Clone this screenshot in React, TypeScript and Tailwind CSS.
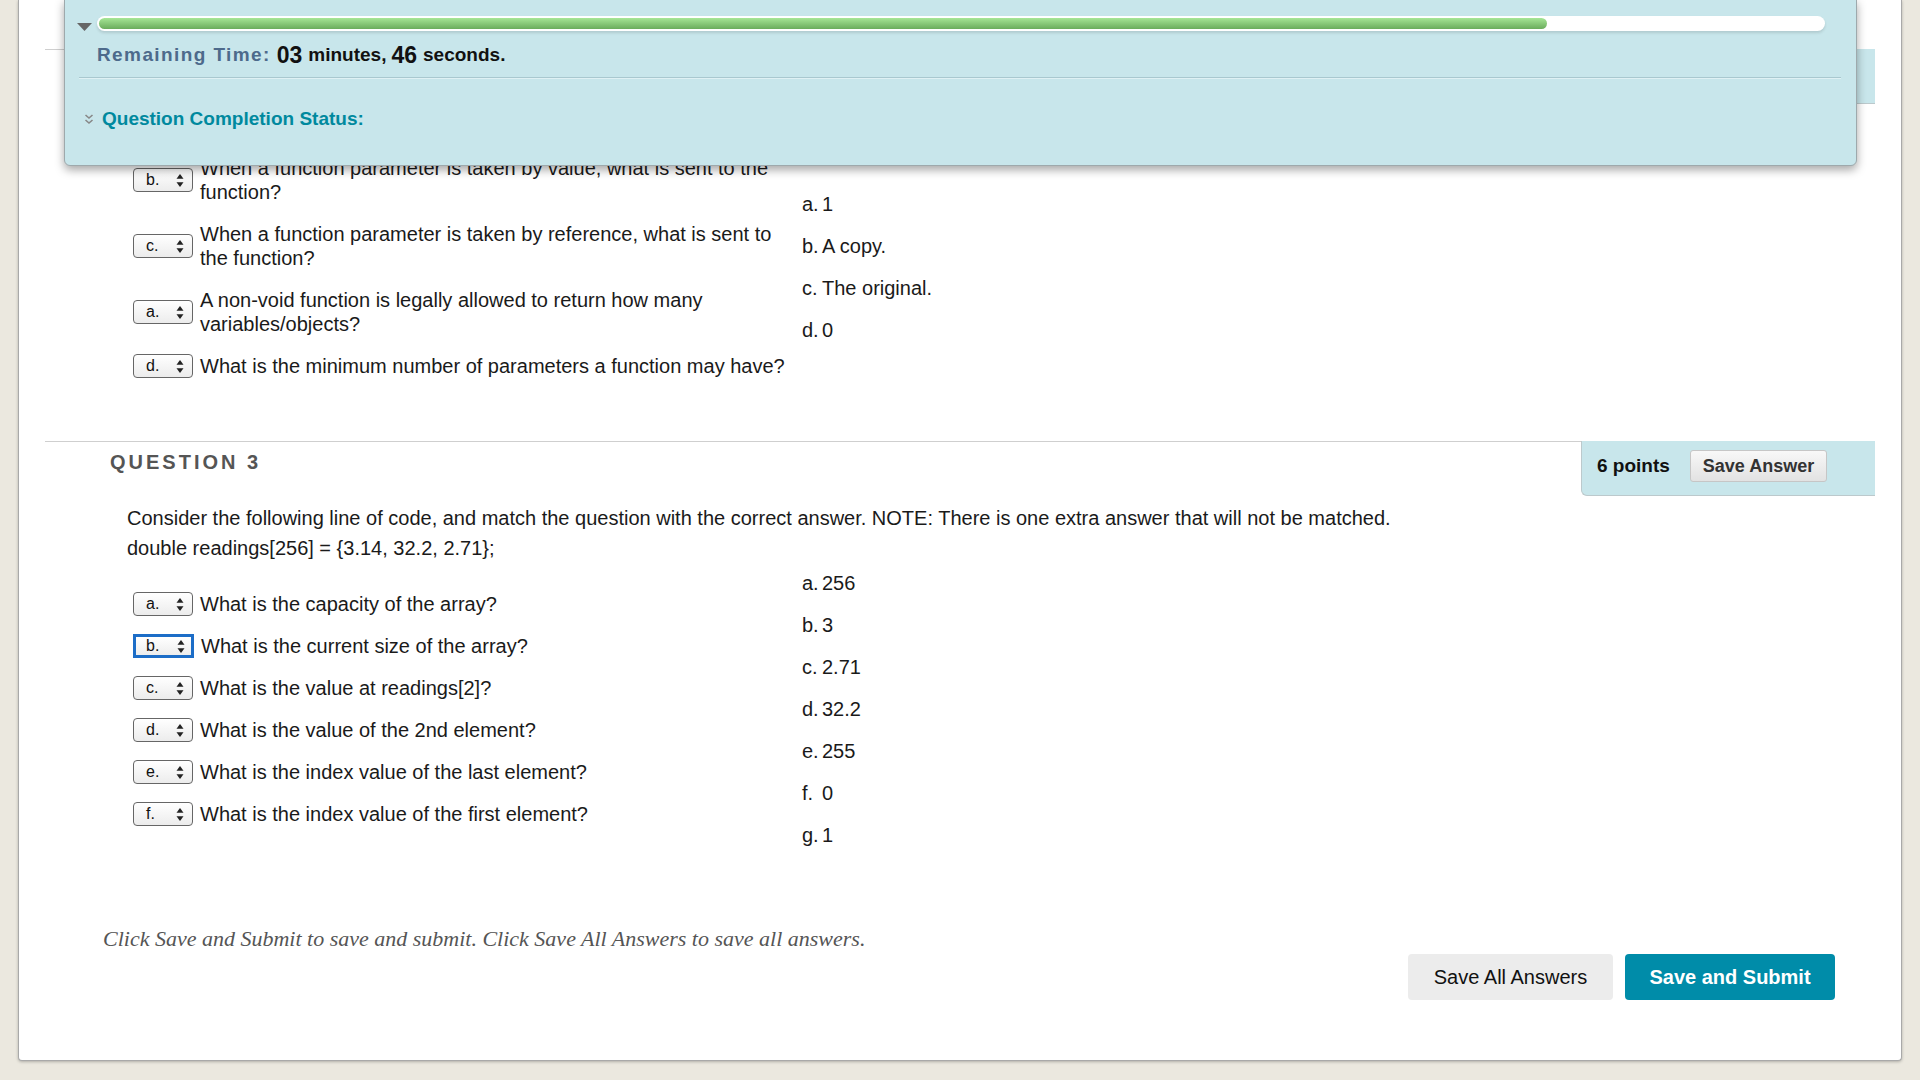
const q2Rows = [
  { sel: "b.", text: "When a function parameter is taken by value, what is sent to the function?" },
  { sel: "c.", text: "When a function parameter is taken by reference, what is sent to the function?" },
  { sel: "a.", text: "A non-void function is legally allowed to return how many variables/objects?" },
  { sel: "d.", text: "What is the minimum number of parameters a function may have?" },
];

const q2Answers = [
  { key: "a.", value: "1" },
  { key: "b.", value: "A copy." },
  { key: "c.", value: "The original." },
  { key: "d.", value: "0" },
];

const q3Rows = [
  { sel: "a.", text: "What is the capacity of the array?" },
  { sel: "b.", text: "What is the current size of the array?", focused: true },
  { sel: "c.", text: "What is the value at readings[2]?" },
  { sel: "d.", text: "What is the value of the 2nd element?" },
  { sel: "e.", text: "What is the index value of the last element?" },
  { sel: "f.", text: "What is the index value of the first element?" },
];

const q3Answers = [
  { key: "a.", value: "256" },
  { key: "b.", value: "3" },
  { key: "c.", value: "2.71" },
  { key: "d.", value: "32.2" },
  { key: "e.", value: "255" },
  { key: "f.", value: "0" },
  { key: "g.", value: "1" },
];

function UpDown() {
  return (
    <svg width="8" height="13" viewBox="0 0 8 13" className="shrink-0 text-[#222]">
      <path d="M4 0 L7.5 4.8 H0.5 Z" fill="currentColor" />
      <path d="M0.5 8.2 H7.5 L4 13 Z" fill="currentColor" />
    </svg>
  );
}

function Select({ value, focused }: { value: string; focused?: boolean }) {
  return (
    <div
      className={
        focused
          ? "w-[61px] h-[24px] shrink-0 flex items-center justify-between pl-[10px] pr-[6px] border-[3px] border-[#1c6dc7] bg-gradient-to-b from-white to-[#ededed] text-[16px] text-[#111]"
          : "w-[60px] h-[24px] shrink-0 flex items-center justify-between pl-[12px] pr-[8px] border border-[#666] rounded-[4px] bg-gradient-to-b from-white to-[#ececec] text-[16px] text-[#111]"
      }
    >
      <span>{value}</span>
      <UpDown />
    </div>
  );
}

function MatchTable({
  rows,
  answers,
}: {
  rows: { sel: string; text: string; focused?: boolean }[];
  answers: { key: string; value: string }[];
}) {
  return (
    <div className="flex items-center ml-[88px]">
      <div className="w-[669px] flex flex-col gap-[18px]">
        {rows.map((r) => (
          <div key={r.sel} className="flex items-center gap-[7px]">
            <Select value={r.sel} focused={r.focused} />
            <p className="w-[596px] text-[20px] leading-[24px] text-[#1a1a1a]">{r.text}</p>
          </div>
        ))}
      </div>
      <div className="flex flex-col gap-[18px]">
        {answers.map((a) => (
          <div key={a.key} className="flex text-[20px] leading-[24px] text-[#1a1a1a]">
            <span className="w-[20px]">{a.key}</span>
            <span>{a.value}</span>
          </div>
        ))}
      </div>
    </div>
  );
}

function QuestionHeader({ title, points }: { title?: string; points: string }) {
  return (
    <div className="flex h-[55px]">
      <div className="flex-1 border-t border-[#cfcfcf] pl-[65px] pt-[8px]">
        {title && (
          <h2 className="text-[20px] leading-[24px] font-bold tracking-[0.15em] text-[#555]">{title}</h2>
        )}
      </div>
      <div className="w-[294px] flex items-start gap-[20px] pl-[15px] pt-[9px] bg-[#c8e6eb] border-b border-l border-[#bcc9cc] rounded-bl-[6px]">
        <span className="text-[19px] leading-[32px] font-bold text-[#111]">{points}</span>
        <button className="h-[32px] px-[12px] rounded-[3px] border border-[#c6c6c6] bg-gradient-to-b from-[#f8f8f8] to-[#e2e2e2] text-[18px] font-bold text-[#333]">
          Save Answer
        </button>
      </div>
    </div>
  );
}

export default function App() {
  return (
    <div className="relative w-full h-[1080px] overflow-hidden bg-[#ebe8df] font-['Liberation_Sans',Arial,sans-serif]">
      {/* Test panel */}
      <div className="ml-[18px] w-[1884px] bg-white border-l border-r border-b border-[#a9a9a9] rounded-b-[4px] shadow-[0_1px_3px_rgba(0,0,0,0.25)] pt-[49px]">
        {/* Question 2 (scrolled up) */}
        <div className="mx-[26px]">
          <QuestionHeader points="6 points" />
          <div className="mt-[52px]">
            <MatchTable rows={q2Rows} answers={q2Answers} />
          </div>
        </div>

        {/* Question 3 */}
        <div className="mx-[26px] mt-[63px]">
          <QuestionHeader title="QUESTION 3" points="6 points" />
          <div className="pl-[82px] pt-[7px] text-[20px] leading-[30px] text-[#1a1a1a]">
            <p>
              Consider the following line of code, and match the question with the correct answer. NOTE: There is one
              extra answer that will not be matched.
            </p>
            <p>double readings[256] = {"{"}3.14, 32.2, 2.71{"}"};</p>
          </div>
          <div className="mt-[8px]">
            <MatchTable rows={q3Rows} answers={q3Answers} />
          </div>
        </div>

        {/* Footer */}
        <div className="mt-[78px] pl-[84px] pr-[66px] pb-[60px]">
          <p className="text-[22px] leading-[28px] italic text-[#555] font-['Liberation_Serif',Georgia,serif]">
            Click Save and Submit to save and submit. Click Save All Answers to save all answers.
          </p>
          <div className="mt-[1px] flex justify-end gap-[12px]">
            <button className="w-[205px] h-[46px] rounded-[4px] bg-[#ececec] text-[20px] text-[#111]">
              Save All Answers
            </button>
            <button className="w-[210px] h-[46px] rounded-[4px] bg-[#008ca9] text-[20px] font-bold text-white">
              Save and Submit
            </button>
          </div>
        </div>
      </div>

      {/* Floating timer overlay */}
      <div className="absolute left-[64px] top-[-1px] w-[1793px] h-[167px] bg-[#c8e6eb] border border-[#9ea9ac] rounded-b-[6px] shadow-[0_4px_10px_rgba(0,0,0,0.35)]">
        <div className="flex items-center gap-[5px] pl-[12px] pr-[31px] pt-[16px]">
          <svg width="15" height="8" viewBox="0 0 15 8" className="shrink-0 mt-[6px] text-[#666]">
            <path d="M0 0 H15 L7.5 8 Z" fill="currentColor" />
          </svg>
          <div className="flex-1 h-[15px] rounded-full bg-white p-[2px] shadow-[0_2px_3px_rgba(0,0,0,0.12)]">
            <div className="w-[84%] h-full rounded-full bg-gradient-to-b from-[#a6e696] to-[#6aac5c]" />
          </div>
        </div>
        <div className="pl-[32px] mt-[9px] h-[30px] flex items-center text-[19px] font-bold text-[#111]">
          <span className="tracking-[1.4px] text-[#4d6a8b]">Remaining Time:</span>
          <span className="ml-[6px] text-[23px]">03</span>
          <span className="ml-[6px]">minutes,</span>
          <span className="ml-[5px] text-[23px]">46</span>
          <span className="ml-[6px]">seconds.</span>
        </div>
        <div className="ml-[14px] mr-[15px] mt-[7px] h-[2px] border-t border-[#a9c8cf] border-b border-b-[#dff1f4]" />
        <div className="mt-[28px] pl-[19px] flex items-center gap-[8px] h-[24px]">
          <svg width="10" height="11" viewBox="0 0 10 11" className="shrink-0 text-[#888]">
            <path d="M1.5 1 L5 4 L8.5 1" fill="none" stroke="currentColor" strokeWidth="1.6" />
            <path d="M1.5 6 L5 9 L8.5 6" fill="none" stroke="currentColor" strokeWidth="1.6" />
          </svg>
          <span className="text-[19px] font-bold text-[#00899e]">Question Completion Status:</span>
        </div>
      </div>
    </div>
  );
}
